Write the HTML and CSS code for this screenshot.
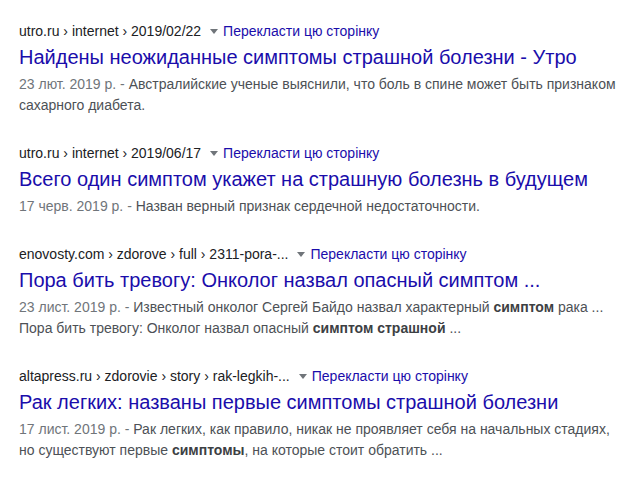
FILE: index.html
```html
<!DOCTYPE html>
<html lang="uk">
<head>
    <meta charset="UTF-8">
    <title>симптомы страшной болезни</title>
    <link rel="stylesheet" href="styles.css">
</head>
<body>
    <div class="results">
        <div class="result">
            <div class="url">
                <cite>utro.ru › internet › 2019/02/22</cite>
                <span class="arrow"></span>
                <a class="translate" href="#">Перекласти цю сторінку</a>
            </div>
            <h3><a href="#">Найдены неожиданные симптомы страшной болезни - Утро</a></h3>
            <div class="snippet"><span class="date">23 лют. 2019 р. - </span>Австралийские ученые выяснили, что боль в спине может быть признаком сахарного диабета.</div>
        </div>

        <div class="result">
            <div class="url">
                <cite>utro.ru › internet › 2019/06/17</cite>
                <span class="arrow"></span>
                <a class="translate" href="#">Перекласти цю сторінку</a>
            </div>
            <h3><a href="#">Всего один симптом укажет на страшную болезнь в будущем</a></h3>
            <div class="snippet"><span class="date">17 черв. 2019 р. - </span>Назван верный признак сердечной недостаточности.</div>
        </div>

        <div class="result">
            <div class="url">
                <cite>enovosty.com › zdorove › full › 2311-pora-...</cite>
                <span class="arrow"></span>
                <a class="translate" href="#">Перекласти цю сторінку</a>
            </div>
            <h3><a href="#">Пора бить тревогу: Онколог назвал опасный симптом ...</a></h3>
            <div class="snippet"><span class="date">23 лист. 2019 р. - </span>Известный онколог Сергей Байдо назвал характерный <b>симптом</b> рака ... Пора бить тревогу: Онколог назвал опасный <b>симптом страшной</b> ...</div>
        </div>

        <div class="result">
            <div class="url">
                <cite>altapress.ru › zdorovie › story › rak-legkih-...</cite>
                <span class="arrow"></span>
                <a class="translate" href="#">Перекласти цю сторінку</a>
            </div>
            <h3><a href="#">Рак легких: названы первые симптомы страшной болезни</a></h3>
            <div class="snippet"><span class="date">17 лист. 2019 р. - </span>Рак легких, как правило, никак не проявляет себя на начальных стадиях, но существуют первые <b>симптомы</b>, на которые стоит обратить ...</div>
        </div>
    </div>
</body>
</html>
```

FILE: styles.css
```css
body {
    margin: 0;
    padding: 21px 0 0 19px;
    background-color: #fff;
    font-family: Arial, "Liberation Sans", sans-serif;
}

.results {
    width: 600px;
}

.result {
    margin-bottom: 27px;
}

.url {
    display: flex;
    align-items: center;
    font-size: 14px;
    line-height: 20px;
    height: 20px;
}

.url cite {
    font-style: normal;
    color: #202124;
    white-space: nowrap;
}

.arrow {
    width: 0;
    height: 0;
    margin: 0 5px 0 9px;
    border-left: 4px solid transparent;
    border-right: 4px solid transparent;
    border-top: 5px solid #70757a;
}

.translate {
    color: #1a0dab;
    text-decoration: none;
}

h3 {
    margin: 3px 0 4px;
    font-size: 20px;
    font-weight: normal;
    line-height: 26px;
}

h3 a {
    color: #1a0dab;
    text-decoration: none;
}

.snippet {
    font-size: 14px;
    line-height: 21px;
    color: #4d5156;
}

.snippet b {
    color: #3c4043;
}

.date {
    color: #70757a;
}
```
